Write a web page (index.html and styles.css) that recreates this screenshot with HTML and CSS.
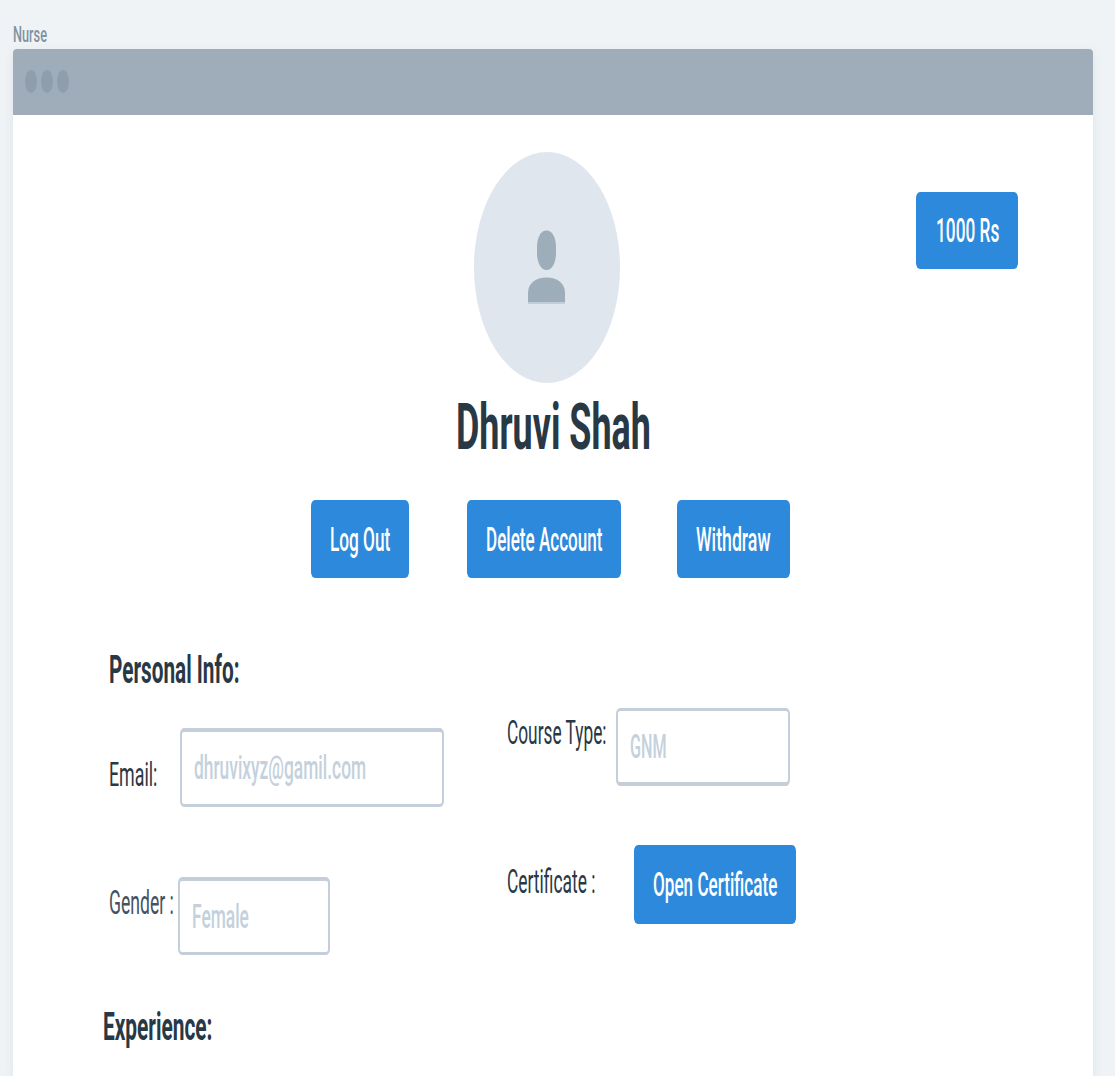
FILE: index.html
```html
<!DOCTYPE html>
<html lang="en">
<head>
<meta charset="utf-8">
<title>Nurse</title>
<link rel="stylesheet" href="styles.css">
</head>
<body>
<div class="caption"><span class="t t-nurse">Nurse</span></div>
<main class="window">
  <header class="titlebar"><i class="dot"></i><i class="dot"></i><i class="dot"></i></header>
  <section class="hero">
    <svg class="avatar" viewBox="0 0 146 231" width="146" height="231" aria-hidden="true">
      <ellipse cx="73" cy="115.5" rx="73" ry="115.5" fill="#dfe6ee"/>
      <path d="M72.5 78.5C78.5 78.5 82 86 82 95V101C82 110 78.5 118 72.5 118S63 110 63 101V95C63 86 66.500 78.500 72.5 78.5Z" fill="#9eadba"/>
      <path d="M54 150V141C54 131 62 125.500 72.5 125.500S91 131 91 141V150Z" fill="#9eadba"/>
      <path d="M54 150H91V152H54Z" fill="#c3ceda"/>
    </svg>
    <button class="btn balance"><span class="t t-balance">1000 Rs</span></button>
  </section>
  <h1 class="name"><span class="t t-name">Dhruvi Shah</span></h1>
  <nav class="actions">
    <button class="btn logout"><span class="t t-logout">Log Out</span></button>
    <button class="btn delete"><span class="t t-delete">Delete Account</span></button>
    <button class="btn withdraw"><span class="t t-withdraw">Withdraw</span></button>
  </nav>
  <h2 class="heading personal"><span class="t t-personal">Personal Info:</span></h2>
  <section class="details">
    <div class="column">
      <div class="row email-row">
        <div class="label email-label"><span class="t t-email">Email:</span></div>
        <div class="field email-field"><span class="t t-address">dhruvixyz@gamil.com</span></div>
      </div>
      <div class="row gender-row">
        <div class="label gender-label"><span class="t t-gender">Gender :</span></div>
        <div class="field gender-field"><span class="t t-female">Female</span></div>
      </div>
    </div>
    <div class="column">
      <div class="row course-row">
        <div class="label course-label"><span class="t t-course">Course Type:</span></div>
        <div class="field course-field"><span class="t t-gnm">GNM</span></div>
      </div>
      <div class="row certificate-row">
        <div class="label certificate-label"><span class="t t-certificate">Certificate :</span></div>
        <button class="btn open"><span class="t t-open">Open Certificate</span></button>
      </div>
    </div>
  </section>
  <h2 class="heading experience"><span class="t t-experience">Experience:</span></h2>
</main>
</body>
</html>
```
FILE: styles.css
```css
* { box-sizing: border-box; }
html, body { height: 100%; }
body {
  margin: 0;
  padding: 22px 22px 0 13px;
  overflow: hidden;
  background: #eff3f6;
  color: #283845;
  font-family: Roboto, "Liberation Sans", sans-serif;
}

/* Condensed lettering: each label is narrowed horizontally from its left edge */
.t {
  display: block;
  width: max-content;
  white-space: nowrap;
  transform: scaleX(var(--sx, .52));
  transform-origin: 0 50%;
}
.t-nurse { --sx: .565; }
.t-balance { --sx: .515; }
.t-name { --sx: .553; }
.t-logout { --sx: .513; }
.t-delete { --sx: .509; }
.t-withdraw { --sx: .528; }
.t-personal { --sx: .546; }
.t-email { --sx: .53; }
.t-address { --sx: .518; }
.t-gender { --sx: .524; }
.t-female { --sx: .517; }
.t-course { --sx: .515; }
.t-gnm { --sx: .48; }
.t-certificate { --sx: .518; }
.t-open { --sx: .51; }
.t-experience { --sx: .535; }

.caption {
  width: 60px;
  height: 27px;
  font-size: 22.5px;
  font-weight: 500;
  line-height: 25px;
  color: #8292a1;
}
.window {
  width: 1080px;
  height: 1027px;
  border-radius: 4px 4px 0 0;
  background: #fff;
  box-shadow: 0 3px 10px rgba(60, 85, 105, .1);
}
.titlebar {
  display: flex;
  align-items: center;
  gap: 4px;
  height: 66px;
  padding: 0 12px 1px;
  border-radius: 4px 4px 0 0;
  background: #9eadb9;
}
.dot {
  width: 12px;
  height: 23px;
  border-radius: 50%;
  background: #8e9eac;
}

.hero {
  display: flex;
  align-items: flex-start;
  gap: 296px;
  padding: 37px 0 0 461px;
}
.avatar { display: block; flex: none; }
.btn {
  display: block;
  flex: none;
  height: 78px;
  margin: 0;
  padding: 0 0 0 19px;
  border: 0;
  border-radius: 4px / 6px;
  background: #2c89db;
  color: #fff;
  font: 500 33.6px/79px Roboto, "Liberation Sans", sans-serif;
  text-align: left;
}
.balance { width: 102px; height: 77px; margin-top: 40px; padding-left: 20px; line-height: 77px; }

.name {
  width: 200px;
  height: 80px;
  margin: 4px 0 0 443px;
  font-size: 64px;
  font-weight: 700;
  line-height: 81px;
}
.t-name { --sx: .561; }

.actions { display: flex; margin-top: 33px; padding-left: 298px; }
.logout { width: 98px; }
.delete { width: 154px; margin-left: 58px; }
.withdraw { width: 113px; margin-left: 56px; }

.heading { width: 140px; height: 50px; margin: 0; line-height: 52px; font-weight: 700; }
.personal { margin: 66px 0 0 96px; font-size: 38px; }
.experience { margin: 45px 0 0 90px; font-size: 39px; }

.details { display: flex; padding-left: 96px; height: 262px; }
.column { width: 398px; }
.row { display: flex; align-items: flex-start; }
.label { flex: none; height: 40px; font-size: 33.6px; line-height: 42px; }
.field {
  flex: none;
  height: 78px;
  padding-left: 12px;
  border: solid #c4cfd9;
  border-width: 3px 2px;
  border-radius: 4px / 6px;
  color: #c4d1dc;
  font-size: 33.6px;
  font-weight: 500;
  line-height: 72px;
}
.email-row { padding-top: 34px; }
.email-label { width: 71px; margin-top: 26px; }
.email-field { width: 264px; height: 79px; border-width: 4px 2px 3px; }
.gender-row { padding-top: 70px; }
.gender-label { width: 69px; margin-top: 5px; color: #46525e; }
.gender-field { width: 152px; border-top-width: 4px; }
.course-row { padding-top: 14px; }
.course-label { width: 109px; margin-top: 4px; }
.course-field { width: 174px; border-bottom-width: 4px; }
.certificate-row { padding-top: 59px; }
.certificate-label { width: 127px; margin-top: 16px; }
.open { width: 162px; height: 79px; line-height: 80px; }
```
